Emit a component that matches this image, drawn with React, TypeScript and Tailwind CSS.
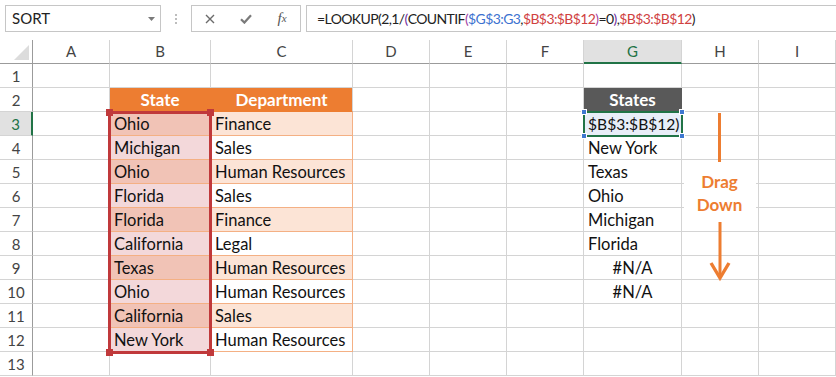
import React from "react";

type Row = { n: number; b?: string; c?: string; g?: string };

const rows: Row[] = [
  { n: 1 },
  { n: 2, b: "State", c: "Department", g: "States" },
  { n: 3, b: "Ohio", c: "Finance", g: "$B$3:$B$12)" },
  { n: 4, b: "Michigan", c: "Sales", g: "New York" },
  { n: 5, b: "Ohio", c: "Human Resources", g: "Texas" },
  { n: 6, b: "Florida", c: "Sales", g: "Ohio" },
  { n: 7, b: "Florida", c: "Finance", g: "Michigan" },
  { n: 8, b: "California", c: "Legal", g: "Florida" },
  { n: 9, b: "Texas", c: "Human Resources", g: "#N/A" },
  { n: 10, b: "Ohio", c: "Human Resources", g: "#N/A" },
  { n: 11, b: "California", c: "Sales" },
  { n: 12, b: "New York", c: "Human Resources" },
  { n: 13 },
];

const letters = ["A", "B", "C", "D", "E", "F", "G", "H", "I"];

const plain = "flex items-center pt-[2px] bg-white border-r border-b border-[#d4d4d4]";

function Cell({ col, row }: { col: string; row: Row }) {
  const n = row.n;
  const odd = n % 2 === 1;

  if (col === "B" && n === 2) {
    return <div className="flex items-center justify-center bg-[#ed7d31] border-r border-b border-[#ed7d31] text-[17px] text-white font-bold">{row.b}</div>;
  }
  if (col === "C" && n === 2) {
    return <div className="flex items-center justify-center bg-[#ed7d31] border-r border-b border-[#ed7d31] border-r-[#d4d4d4] text-[17px] text-white font-bold">{row.c}</div>;
  }
  if (col === "G" && n === 2) {
    return <div className="flex items-center justify-center bg-[#595959] border-r border-b border-[#595959] text-[17px] text-white font-bold">{row.g}</div>;
  }
  if (col === "B" && row.b) {
    return (
      <div className={odd ? "flex items-center pt-[2px] pl-[4px] bg-[#f1c3b6] border-r border-b border-[#f4b084]" : "flex items-center pt-[2px] pl-[4px] bg-[#f3d8da] border-r border-b border-[#f4b084]"}>
        {row.b}
      </div>
    );
  }
  if (col === "C" && row.c) {
    return (
      <div className={odd ? "flex items-center pt-[2px] pl-[4px] bg-[#fce4d6] border-r border-b border-[#f4b084]" : "flex items-center pt-[2px] pl-[4px] bg-white border-r border-b border-[#f4b084]"}>
        {row.c}
      </div>
    );
  }
  if (col === "G" && n === 3) {
    return <div className="flex items-center overflow-hidden whitespace-nowrap pt-[2px] pl-[4px] bg-[#e8eef8] border-r border-b border-[#d4d4d4] text-[15.6px]">{row.g}</div>;
  }
  if (col === "G" && row.g === "#N/A") {
    return <div className={plain + " justify-center"}>{row.g}</div>;
  }
  if (col === "G" && row.g) {
    return <div className={plain + " pl-[4px]"}>{row.g}</div>;
  }
  return <div className={plain} />;
}

function FormulaBar() {
  return (
    <div className="flex h-[40px] items-start bg-white pl-[5px] pt-[5px] text-[15px] text-[#222]">
      <div className="flex h-[27px] w-[156px] items-center justify-between border border-[#c6c6c6] pl-[6px] pr-[5px]">
        <span>SORT</span>
        <svg width="7" height="4" viewBox="0 0 7 4">
          <polygon points="0,0 7,0 3.5,4" fill="#7a7a7a" />
        </svg>
      </div>
      <div className="flex h-[27px] w-[30px] flex-col items-center justify-center gap-[2px]">
        <span className="h-[2px] w-[2px] bg-[#bdbdbd]" />
        <span className="h-[2px] w-[2px] bg-[#bdbdbd]" />
        <span className="h-[2px] w-[2px] bg-[#bdbdbd]" />
      </div>
      <div className="flex h-[27px] w-[110px] items-center border border-[#c6c6c6]">
        <div className="flex w-[36px] justify-center">
          <svg width="10" height="10" viewBox="0 0 10 10">
            <path d="M1 1 L9 9 M9 1 L1 9" stroke="#6b6b6b" strokeWidth="1.4" />
          </svg>
        </div>
        <div className="flex w-[36px] justify-center">
          <svg width="12" height="10" viewBox="0 0 12 10">
            <path d="M1 5.2 L4.4 8.6 L11 1.2" stroke="#7a7a7a" strokeWidth="2.2" fill="none" />
          </svg>
        </div>
        <div className="flex w-[36px] justify-center font-['Liberation_Serif',serif] italic text-[#555]">
          <span className="text-[15px]">f</span>
          <span className="mt-[3px] text-[11px]">x</span>
        </div>
      </div>
      <div className="ml-[5px] flex h-[27px] flex-1 items-center border border-r-0 border-[#c6c6c6] pl-[10px] whitespace-nowrap text-[14px] tracking-[-0.6px]">
        <span>=LOOKUP(2,1/</span>
        <span className="text-[#7030a0]">(</span>
        <span>COUNTIF</span>
        <span className="text-[#a33fa3]">(</span>
        <span className="text-[#3c72d0]">$G$3:G3</span>
        <span>,</span>
        <span className="text-[#d0413f]">$B$3:$B$12</span>
        <span className="text-[#a33fa3]">)</span>
        <span>=0</span>
        <span className="text-[#7030a0]">)</span>
        <span>,</span>
        <span className="text-[#d0413f]">$B$3:$B$12</span>
        <span>)</span>
      </div>
    </div>
  );
}

export default function App() {
  return (
    <div className="h-[377px] w-[836px] overflow-hidden bg-white font-['Lato',sans-serif] text-[16.5px] text-[#111]">
      <FormulaBar />
      <div className="relative grid auto-rows-[24px] grid-cols-[33px_77px_101px_142px_77px_77px_77px_98px_77px_77px]">
        {/* column headers */}
        <div className="flex items-end justify-end border-r border-b border-[#9b9b9b] border-r-[#9b9b9b] bg-white p-[3px]">
          <svg width="15" height="15" viewBox="0 0 15 15">
            <polygon points="15,0 15,15 0,15" fill="#dcdcdc" />
          </svg>
        </div>
        {letters.map((l) =>
          l === "G" ? (
            <div key={l} className="flex items-center justify-center border-r border-b-2 border-[#d4d4d4] border-b-[#217346] bg-[#e1e1e1] text-[15px] text-[#217346]">
              {l}
            </div>
          ) : (
            <div key={l} className="flex items-center justify-center border-r border-b border-[#d4d4d4] border-b-[#9b9b9b] bg-white text-[15px] text-[#444]">
              {l}
            </div>
          )
        )}

        {rows.map((r) => (
          <React.Fragment key={r.n}>
            {r.n === 3 ? (
              <div className="flex items-center justify-center pt-[2px] border-r-2 border-b border-[#d4d4d4] border-r-[#217346] bg-[#e1e1e1] text-[15px] text-[#217346]">
                {r.n}
              </div>
            ) : (
              <div className="flex items-center justify-center pt-[2px] border-r border-b border-[#d4d4d4] border-r-[#9b9b9b] bg-white text-[15px] text-[#444]">
                {r.n}
              </div>
            )}
            {letters.map((l) => (
              <Cell key={l} col={l} row={r} />
            ))}
          </React.Fragment>
        ))}

        {/* formula reference B3:B12 */}
        <div className="absolute left-[108px] top-[71px] h-[243px] w-[104px] border-[3px] border-[#c0393b]" />
        <div className="absolute left-[106px] top-[69px] h-[7px] w-[7px] bg-[#c0393b]" />
        <div className="absolute left-[207px] top-[69px] h-[7px] w-[7px] bg-[#c0393b]" />
        <div className="absolute left-[106px] top-[309px] h-[7px] w-[7px] bg-[#c0393b]" />
        <div className="absolute left-[207px] top-[309px] h-[7px] w-[7px] bg-[#c0393b]" />

        {/* active cell G3 */}
        <div className="absolute left-[583px] top-[71px] h-[26px] w-[100px] border-2 border-[#217346]" />
        <div className="absolute left-[581px] top-[69px] h-[6px] w-[6px] border border-white bg-[#3f78d1]" />
        <div className="absolute left-[679px] top-[69px] h-[6px] w-[6px] border border-white bg-[#3f78d1]" />
        <div className="absolute left-[581px] top-[93px] h-[6px] w-[6px] border border-white bg-[#3f78d1]" />
        <div className="absolute left-[679px] top-[93px] h-[6px] w-[6px] border border-white bg-[#3f78d1]" />

        {/* drag down note */}
        <div className="absolute left-[683px] top-[73px] flex w-[73px] flex-col items-center">
          <div className="h-[49px] w-[3px] bg-[#ed7d31]" />
          <div className="mt-[6px] flex w-[72px] flex-col items-center bg-white pt-[2px] text-[17px] font-bold leading-[23px] text-[#ed7d31]">
            <span>Drag</span>
            <span>Down</span>
          </div>
          <svg className="mt-[6px]" width="24" height="60" viewBox="0 0 24 60">
            <path d="M12 0 L12 56" stroke="#ed7d31" strokeWidth="3" />
            <polyline points="3,41 12,56 21,41" stroke="#ed7d31" strokeWidth="3.4" fill="none" />
          </svg>
        </div>
      </div>
    </div>
  );
}
